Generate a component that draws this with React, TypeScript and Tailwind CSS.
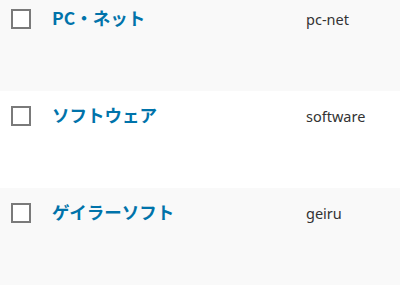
const rows = [
  { name: "PC・ネット", slug: "pc-net" },
  { name: "ソフトウェア", slug: "software" },
  { name: "ゲイラーソフト", slug: "geiru" },
  { name: "", slug: "" },
];

function Checkbox() {
  return <span className="block w-5 h-5 border-2 border-[#7a7a7a] bg-white shrink-0" />;
}

export default function App() {
  return (
    <div className="w-[400px] h-[288px] overflow-hidden bg-white" style={{ fontFamily: '"Noto Sans", "Noto Sans CJK JP", sans-serif' }}>
      <div className="-mt-[6px]">
        {rows.map((row, i) => (
          <div
            key={i}
            className={`h-[97px] flex items-start pt-[15px] ${i % 2 === 0 ? "bg-[#f9f9f9]" : "bg-white"}`}
          >
            {row.name && (
              <>
                <div className="w-[52px] pl-[11px]">
                  <Checkbox />
                </div>
                <a
                  className="w-[254px] text-[17.5px] leading-[18px] font-bold text-[#0073aa]"
                  style={{ fontFamily: '"Noto Sans CJK JP", sans-serif' }}
                >
                  {row.name}
                </a>
                <div className="text-[14.5px] leading-[20px] text-[#333]">{row.slug}</div>
              </>
            )}
          </div>
        ))}
      </div>
    </div>
  );
}
